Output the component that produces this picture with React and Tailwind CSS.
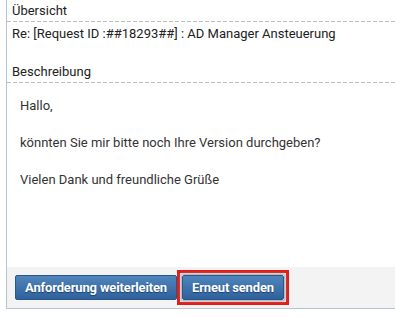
import React from 'react';

const dash = 'h-px bg-[linear-gradient(to_right,#bdbdbd_4px,transparent_4px)] bg-[length:6px_1px]';

const SectionTitle = ({ children }) => (
  <div>
    <div className="h-[21px] pl-[5px] text-[13px] leading-[21px] text-[#222]">{children}</div>
    <div className={dash} />
  </div>
);

const Button = ({ children }) => (
  <button className="h-[25px] px-[9px] rounded-[2px] border border-[#2b5488] bg-[linear-gradient(to_bottom,#4f84bd,#2f629c)] text-[13px] font-bold tracking-[-0.15px] text-white leading-[23px] [text-shadow:0_1px_1px_#1d3f6b]">
    {children}
  </button>
);

const App = () => {
  return (
    <div className="w-[395px] h-[317px] bg-white font-['Roboto',sans-serif]">
      <div className="ml-[6px] h-[309px] border-l border-b border-[#b7c5d4] flex flex-col">
        <SectionTitle>Übersicht</SectionTitle>
        <div className="pl-[5px] h-[23px] text-[13px] leading-[23px] text-[#222]">
          Re: [Request ID :##18293##] : AD Manager Ansteuerung
        </div>
        <div className="h-[16px]" />
        <SectionTitle>Beschreibung</SectionTitle>
        <div className="flex-1 pl-[13px] pt-[13px] text-[13px] leading-[19px] text-[#333]">
          <p className="mb-[18px]">Hallo,</p>
          <p className="mb-[18px]">könnten Sie mir bitte noch Ihre Version durchgeben?</p>
          <p>Vielen Dank und freundliche Grüße</p>
        </div>
        <div className="h-[41px] bg-[#f3f3f3] flex items-center pl-[8px]">
          <Button>Anforderung weiterleiten</Button>
          <div className="border-[3px] border-[#e41b1b] p-[2px]">
            <div className="shadow-[0_0_3px_1px_#9a9a9a]">
              <Button>Erneut senden</Button>
            </div>
          </div>
        </div>
      </div>
    </div>
  );
};

export default App;
